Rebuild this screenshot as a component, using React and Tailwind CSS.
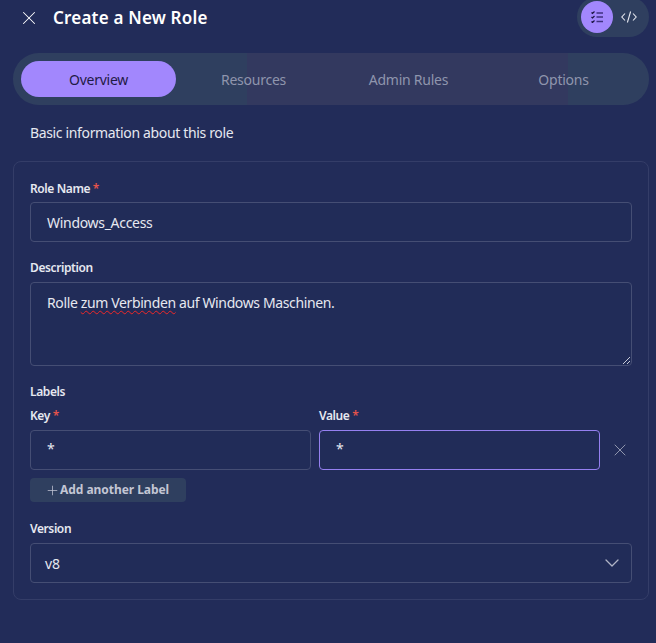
import React from 'react';
import { X, ChevronDown, Plus } from 'lucide-react';

const font = { fontFamily: '"Noto Sans", sans-serif' };

const tabs = ['Overview', 'Resources', 'Admin Rules', 'Options'];

const Label = ({ children, required }) => (
  <div className="text-[12px] leading-4 font-semibold tracking-[-0.4px] text-[#e6e8f0]">
    {children}
    {required && <span className="text-[#e5534b]"> *</span>}
  </div>
);

const Field = ({ value, focused, className = '' }) => (
  <div
    className={`h-10 rounded flex items-center pl-4 text-[14px] tracking-[-0.3px] text-[#e6e8f0] border ${focused ? 'border-[#9580f0]' : 'border-[#454e74]'} bg-[#212c58] ${className}`}
  >
    {value}
  </div>
);

const ChecklistIcon = () => (
  <svg width="12" height="12" viewBox="0 0 12 12" fill="none">
    <path d="M0.5 1.5l1 1 2-2M0.5 6l1 1 2-2M0.5 10.5l1 1 2-2" stroke="#1a1540" strokeWidth="1.2" />
    <path d="M5.5 2h6.5M5.5 6h6.5M5.5 10.5h6.5" stroke="#3f3180" strokeWidth="1.6" />
  </svg>
);

const CodeIcon = () => (
  <svg width="16" height="12" viewBox="0 0 16 12" fill="none" stroke="#e6e8f0" strokeWidth="1.1">
    <path d="M4 2.5L0.8 6 4 9.5M12 2.5L15.2 6 12 9.5M9.6 0.5L6.4 11.5" />
  </svg>
);

export default function App() {
  return (
    <div className="w-[656px] h-[643px] overflow-hidden bg-[#222c59] pl-[13px] pr-[7px]" style={font}>
      {/* header */}
      <div className="flex items-start justify-between h-[53px]">
        <div className="flex items-center h-9 pl-[5px] gap-[13px]">
          <X size={22} strokeWidth={1.1} className="text-white" />
          <span className="text-[17px] font-semibold tracking-[0.2px] text-white">Create a New Role</span>
        </div>
        <div className="-mt-[3px] h-10 w-[72px] rounded-[20px] bg-[#2f3f5f] flex items-center pl-1 gap-2">
          <div className="w-8 h-8 rounded-full bg-[#a287fd] flex items-center justify-center">
            <ChecklistIcon />
          </div>
          <CodeIcon />
        </div>
      </div>

      {/* tabs */}
      <div className="h-[52px] rounded-[26px] px-2 flex items-center bg-[linear-gradient(90deg,#2f3f5f_0,#2f3f5f_234px,#33395f_234px,#33395f_555px,#2f3f5f_555px)]">
        {tabs.map((tab, i) => (
          <div
            key={tab}
            className={`w-[155px] h-9 rounded-[18px] flex items-center justify-center text-[14px] tracking-[-0.25px] ${i === 0 ? 'bg-[#a287fd] text-[#1f1a45]' : 'text-[#8f95ad]'}`}
          >
            {tab}
          </div>
        ))}
      </div>

      <div className="mt-[18px] pl-[17px] text-[14px] leading-5 tracking-[-0.35px] text-[#e6e8f0]">Basic information about this role</div>

      {/* form card */}
      <div className="mt-[18px] h-[439px] rounded-lg border border-[#343d68] px-4 pt-[19px]">
        <Label required>Role Name</Label>
        <Field value="Windows_Access" className="mt-[5px]" />

        <div className="mt-[18px]">
          <Label>Description</Label>
        </div>
        <div className="relative mt-[6px] h-[84px] rounded border border-[#454e74] bg-[#212c58] pl-4 pt-[10px] text-[14px] leading-5 tracking-[-0.37px] text-[#e6e8f0]">
          Rolle <span className="underline decoration-wavy decoration-[#f02828] decoration-1 underline-offset-2">zum Verbinden</span> auf Windows Maschinen.
          <svg width="10" height="10" viewBox="0 0 10 10" className="absolute right-0 bottom-0" stroke="#c8cbd8">
            <path d="M2 9l7-7M6 9l3-3" />
          </svg>
        </div>

        <div className="mt-[18px]">
          <Label>Labels</Label>
        </div>
        <div className="mt-[8px] flex items-start">
          <div className="w-[281px] shrink-0">
            <Label required>Key</Label>
            <Field value={<span className="-mt-1">*</span>} className="mt-[6px]" />
          </div>
          <div className="w-[281px] shrink-0 ml-2">
            <Label required>Value</Label>
            <Field value={<span className="-mt-1">*</span>} focused className="mt-[6px]" />
          </div>
          <div className="w-[40px] shrink-0 h-10 mt-[22px] flex items-center justify-center">
            <X size={20} strokeWidth={1.2} className="text-[#8f95ad]" />
          </div>
        </div>
        <div className="mt-2 w-[156px] h-6 rounded-sm bg-[#2f3f5f] flex items-center pl-[15px] text-[12px] font-bold tracking-[-0.05px] text-[#c3c6d4]">
          <Plus size={15} strokeWidth={1.2} />
          Add another Label
        </div>

        <div className="mt-[19px]">
          <Label>Version</Label>
        </div>
        <div className="mt-[6px] h-10 rounded border border-[#454e74] bg-[#212c58] flex items-center justify-between pl-[14px] pr-[7px] text-[14px] text-[#e6e8f0]">
          v8
          <ChevronDown size={24} strokeWidth={1.3} className="text-[#b0b4c6]" />
        </div>
      </div>
    </div>
  );
}
